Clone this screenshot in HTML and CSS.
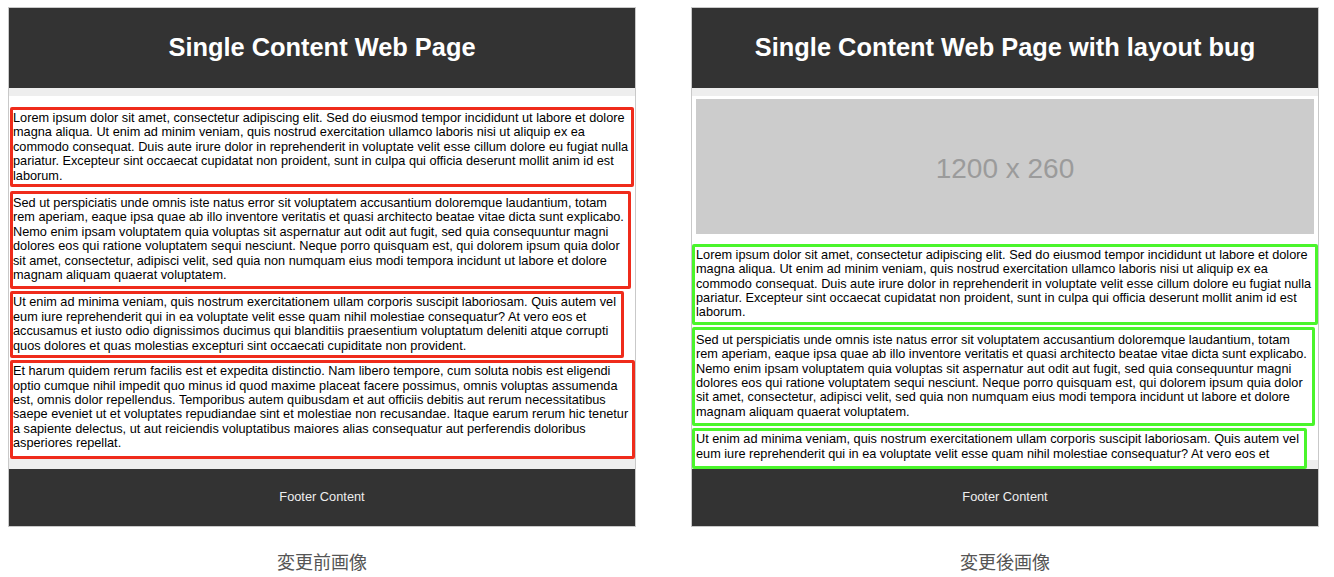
FILE: index.html
```html
<!DOCTYPE html>
<html lang="ja">
<head>
<meta charset="utf-8">
<title>変更前後の比較</title>
<link rel="stylesheet" href="styles.css">
</head>
<body>
<div class="page">
  <figure class="figure">
    <div class="frame">
      <header class="site-header"><h1 class="site-title">Single Content Web Page</h1></header>
      <main class="site-main main-before">
        <div class="note note-red n1">
          <p class="para">Lorem ipsum dolor sit amet, consectetur adipiscing elit. Sed do eiusmod tempor incididunt ut labore et dolore magna aliqua. Ut enim ad minim veniam, quis nostrud exercitation ullamco laboris nisi ut aliquip ex ea commodo consequat. Duis aute irure dolor in reprehenderit in voluptate velit esse cillum dolore eu fugiat nulla pariatur. Excepteur sint occaecat cupidatat non proident, sunt in culpa qui officia deserunt mollit anim id est laborum.</p>
        </div>
        <div class="note note-red n2">
          <p class="para">Sed ut perspiciatis unde omnis iste natus error sit voluptatem accusantium doloremque laudantium, totam rem aperiam, eaque ipsa quae ab illo inventore veritatis et quasi architecto beatae vitae dicta sunt explicabo. Nemo enim ipsam voluptatem quia voluptas sit aspernatur aut odit aut fugit, sed quia consequuntur magni dolores eos qui ratione voluptatem sequi nesciunt. Neque porro quisquam est, qui dolorem ipsum quia dolor sit amet, consectetur, adipisci velit, sed quia non numquam eius modi tempora incidunt ut labore et dolore magnam aliquam quaerat voluptatem.</p>
        </div>
        <div class="note note-red n3">
          <p class="para">Ut enim ad minima veniam, quis nostrum exercitationem ullam corporis suscipit laboriosam. Quis autem vel eum iure reprehenderit qui in ea voluptate velit esse quam nihil molestiae consequatur? At vero eos et accusamus et iusto odio dignissimos ducimus qui blanditiis praesentium voluptatum deleniti atque corrupti quos dolores et quas molestias excepturi sint occaecati cupiditate non provident.</p>
        </div>
        <div class="note note-red n4">
          <p class="para">Et harum quidem rerum facilis est et expedita distinctio. Nam libero tempore, cum soluta nobis est eligendi optio cumque nihil impedit quo minus id quod maxime placeat facere possimus, omnis voluptas assumenda est, omnis dolor repellendus. Temporibus autem quibusdam et aut officiis debitis aut rerum necessitatibus saepe eveniet ut et voluptates repudiandae sint et molestiae non recusandae. Itaque earum rerum hic tenetur a sapiente delectus, ut aut reiciendis voluptatibus maiores alias consequatur aut perferendis doloribus asperiores repellat.</p>
        </div>
      </main>
      <footer class="site-footer">Footer Content</footer>
    </div>
    <figcaption class="caption">変更前画像</figcaption>
  </figure>

  <figure class="figure">
    <div class="frame">
      <header class="site-header"><h1 class="site-title">Single Content Web Page with layout bug</h1></header>
      <main class="site-main main-after">
        <div class="placeholder">1200 x 260</div>
        <div class="note note-green g1">
          <p class="para">Lorem ipsum dolor sit amet, consectetur adipiscing elit. Sed do eiusmod tempor incididunt ut labore et dolore magna aliqua. Ut enim ad minim veniam, quis nostrud exercitation ullamco laboris nisi ut aliquip ex ea commodo consequat. Duis aute irure dolor in reprehenderit in voluptate velit esse cillum dolore eu fugiat nulla pariatur. Excepteur sint occaecat cupidatat non proident, sunt in culpa qui officia deserunt mollit anim id est laborum.</p>
        </div>
        <div class="note note-green g2">
          <p class="para">Sed ut perspiciatis unde omnis iste natus error sit voluptatem accusantium doloremque laudantium, totam rem aperiam, eaque ipsa quae ab illo inventore veritatis et quasi architecto beatae vitae dicta sunt explicabo. Nemo enim ipsam voluptatem quia voluptas sit aspernatur aut odit aut fugit, sed quia consequuntur magni dolores eos qui ratione voluptatem sequi nesciunt. Neque porro quisquam est, qui dolorem ipsum quia dolor sit amet, consectetur, adipisci velit, sed quia non numquam eius modi tempora incidunt ut labore et dolore magnam aliquam quaerat voluptatem.</p>
        </div>
        <div class="note note-green g3">
          <p class="para">Ut enim ad minima veniam, quis nostrum exercitationem ullam corporis suscipit laboriosam. Quis autem vel eum iure reprehenderit qui in ea voluptate velit esse quam nihil molestiae consequatur? At vero eos et</p>
        </div>
      </main>
      <footer class="site-footer">Footer Content</footer>
    </div>
    <figcaption class="caption">変更後画像</figcaption>
  </figure>
</div>
</body>
</html>
```

FILE: styles.css
```css
html, body {
  margin: 0;
  padding: 0;
  background: #ffffff;
}

body {
  font-family: "Liberation Sans", Arial, "Noto Sans CJK JP", sans-serif;
  color: #111111;
}

.page {
  display: flex;
  gap: 55px;
  padding: 7px 0 0 8px;
}

.figure {
  margin: 0;
  width: 628px;
  display: flex;
  flex-direction: column;
}

.frame {
  border: 1px solid #c9c9c9;
  display: flex;
  flex-direction: column;
  overflow: hidden;
}

.site-header {
  height: 80px;
  background: #333333;
  display: flex;
  align-items: center;
  justify-content: center;
}

.site-title {
  margin: 0;
  color: #ffffff;
  font-size: 25.4px;
  font-weight: bold;
  line-height: 30px;
  padding-bottom: 2px;
}

.site-main {
  height: 381px;
  display: flex;
  flex-direction: column;
  align-items: flex-start;
}

.main-before {
  padding-top: 19px;
  box-sizing: border-box;
  background: linear-gradient(to bottom, #eeeeee 0, #eeeeee 8px, #ffffff 8px, #ffffff 370px, #eeeeee 370px);
}

.main-after {
  padding-top: 11px;
  box-sizing: border-box;
  background: linear-gradient(to bottom, #eeeeee 0, #eeeeee 8px, #ffffff 8px, #ffffff 372px, #eeeeee 372px);
}

.placeholder {
  margin-left: 4px;
  width: 618px;
  height: 135px;
  box-sizing: border-box;
  padding-top: 6px;
  background: #cccccc;
  color: #9b9b9b;
  font-size: 28px;
  display: flex;
  align-items: center;
  justify-content: center;
  margin-bottom: 10px;
}

.note {
  box-sizing: border-box;
  border-style: solid;
  border-width: 3px;
  border-radius: 2px;
  background: #ffffff;
}

.note-red {
  border-color: #ef2b1b;
  margin-left: 1px;
}

.note-green {
  border-color: #4af52b;
  padding-left: 1px;
}

.para {
  margin: 0;
  width: 618px;
  font-size: 12.72px;
  line-height: 14.4px;
  color: #000000;
}

.n1 { width: 624px; padding: 1px 0 1px 0; margin-bottom: 4px; }
.n2 { width: 621px; padding: 2px 0 4px 0; margin-bottom: 2px; }
.n3 { width: 614px; padding: 1px 0 2px 0; margin-bottom: 2px; }
.n4 { width: 625px; padding: 1px 0 5px 0; }

.g1 { width: 626px; padding-top: 1px; padding-bottom: 2px; margin-bottom: 2px; }
.g2 { width: 623px; padding-top: 3px; padding-bottom: 4px; margin-bottom: 2px; }
.g3 { width: 615px; padding-top: 1px; padding-bottom: 5px; }

.site-footer {
  height: 57px;
  box-sizing: border-box;
  padding-bottom: 2px;
  background: #333333;
  color: #eeeeee;
  font-size: 12.8px;
  display: flex;
  align-items: center;
  justify-content: center;
}

.caption {
  margin-top: 21px;
  text-align: center;
  font-family: "Noto Sans CJK JP", "Noto Sans", sans-serif;
  font-size: 18px;
  line-height: 26px;
  color: #555555;
}
```
